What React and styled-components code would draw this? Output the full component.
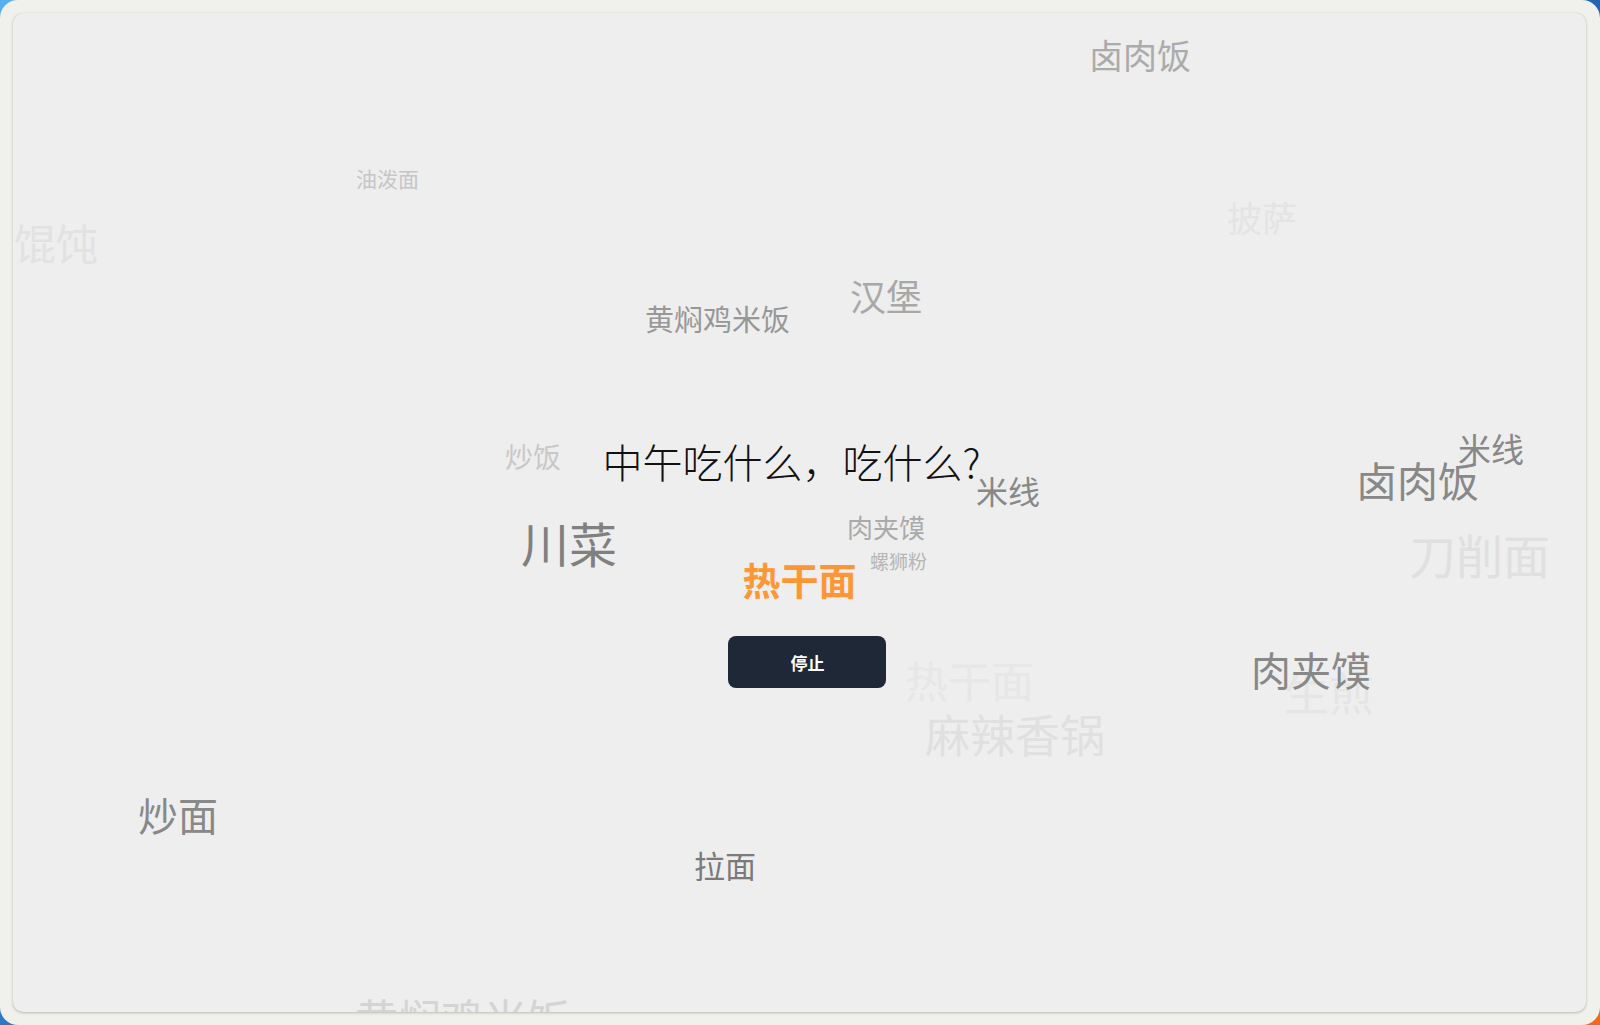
import styled, { createGlobalStyle } from "styled-components";

const GlobalStyle = createGlobalStyle`
  html, body {
    margin: 0;
    padding: 0;
    width: 1600px;
    height: 1025px;
    overflow: hidden;
    background: linear-gradient(135deg, #58b0f0 0%, #2470c0 45%, #1d5aa6 75%, #f06a1a 97%);
    font-family: "Noto Sans CJK SC", "Noto Sans", sans-serif;
  }
`;

const Frame = styled.div`
  width: 1600px;
  height: 1025px;
  box-sizing: border-box;
  padding: 13px 14px 13px 13px;
  border-radius: 18px;
  background: #f0f0ec;
  display: flex;
`;

const Panel = styled.main`
  position: relative;
  flex: 1;
  overflow: hidden;
  border-radius: 10px;
  background: #eeeeee;
  box-shadow: 0 1px 3px rgba(0, 0, 0, 0.22), 0 0 1px rgba(0, 0, 0, 0.15);
  display: flex;
  flex-direction: column;
  align-items: center;
`;

const Word = styled.span`
  position: absolute;
  left: ${(p) => p.$x}px;
  top: ${(p) => p.$y}px;
  font-size: ${(p) => p.$size}px;
  line-height: 1;
  color: ${(p) => p.$color};
  white-space: nowrap;
  pointer-events: none;
`;

const Stage = styled.div`
  position: relative;
  z-index: 2;
  display: flex;
  flex-direction: column;
  align-items: center;
  padding-top: 428px;
`;

const Title = styled.h1`
  margin: 0 16px 0 0;
  font-size: 40px;
  line-height: 1;
  font-weight: 300;
  color: #111;
`;

const Result = styled.div`
  margin-top: 79px;
  font-size: 38px;
  line-height: 1;
  font-weight: 700;
  color: #fd9735;
`;

const StopButton = styled.button`
  margin: 38px 0 0 16px;
  width: 158px;
  height: 52px;
  border: none;
  border-radius: 8px;
  background: #1f2837;
  color: #fff;
  font-family: inherit;
  font-size: 17px;
  font-weight: 700;
  cursor: pointer;
`;

// ink position (x, y in page px), font size, colour
const words = [
  ["卤肉饭", 1090, 41, 34, "#ababab"],
  ["油泼面", 357, 170, 21, "#c6c6c6"],
  ["披萨", 1228, 202, 35, "#e4e4e4"],
  ["馄饨", 16, 225, 42, "#e2e2e2"],
  ["汉堡", 851, 281, 36, "#a8a8a8"],
  ["黄焖鸡米饭", 646, 307, 29, "#979797"],
  ["炒饭", 506, 445, 28, "#c8c8c8"],
  ["米线", 977, 477, 32, "#888888"],
  ["米线", 1459, 435, 33, "#888888"],
  ["卤肉饭", 1358, 463, 41, "#888888"],
  ["川菜", 523, 523, 48, "#808080"],
  ["肉夹馍", 848, 517, 26, "#aaaaaa"],
  ["螺狮粉", 871, 553, 19, "#b6b6b6"],
  ["刀削面", 1411, 535, 47, "#e0e0e0"],
  ["热干面", 907, 662, 43, "#e7e7e7"],
  ["生煎", 1286, 673, 45, "#e5e5e5"],
  ["肉夹馍", 1253, 653, 40, "#888888"],
  ["麻辣香锅", 927, 715, 45, "#e0e0e0"],
  ["炒面", 140, 798, 40, "#888888"],
  ["拉面", 695, 852, 31, "#7a7a7a"],
  ["黄焖鸡米饭", 357, 1000, 43, "#d4d4d4"],
];

export default function App() {
  return (
    <>
      <GlobalStyle />
      <Frame>
        <Panel>
          {words.map(([text, x, y, size, color], i) => (
            <Word
              key={i}
              $x={Math.round(x - 13 - size * 0.04)}
              $y={Math.round(y - 13 - size * 0.1)}
              $size={size}
              $color={color}
            >
              {text}
            </Word>
          ))}
          <Stage>
            <Title>中午吃什么，吃什么?</Title>
            <Result>热干面</Result>
            <StopButton>停止</StopButton>
          </Stage>
        </Panel>
      </Frame>
    </>
  );
}
